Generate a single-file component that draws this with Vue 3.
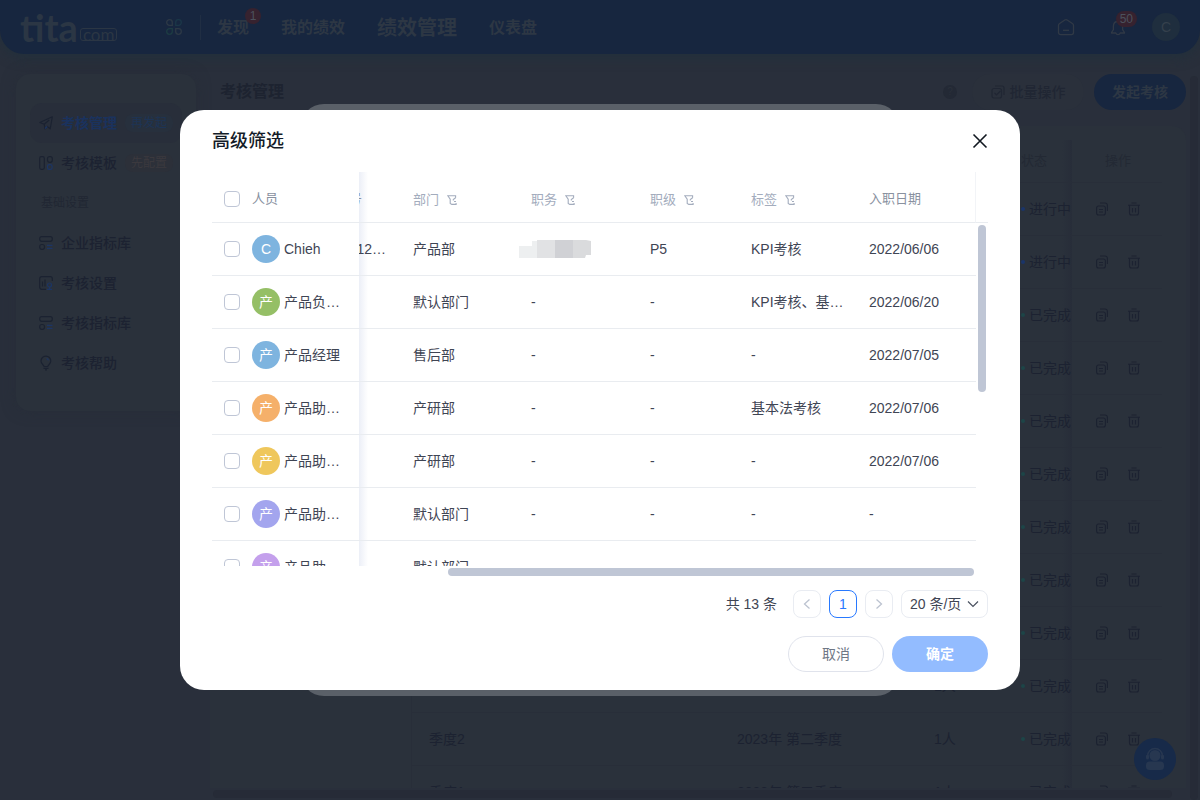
<script setup>
import { ref } from 'vue'

const navItems = [
  { label: '发现', badge: '1' },
  { label: '我的绩效' },
  { label: '绩效管理', active: true },
  { label: '仪表盘' }
]

const topLinks = [
  { label: '考核管理', icon: 'plane', tag: '再发起', active: true },
  { label: '考核模板', icon: 'blocks', tag: '先配置' }
]
const baseLinks = [
  { label: '企业指标库', icon: 'list' },
  { label: '考核设置', icon: 'chart' },
  { label: '考核指标库', icon: 'list' },
  { label: '考核帮助', icon: 'bulb' }
]

const plans = Array.from({ length: 12 }, (_, i) => ({
  name: i > 9 ? (i === 10 ? '季度2' : '季度1') : '',
  period: i > 9 ? '2023年 第二季度' : '',
  count: i > 8 ? '1人' : '',
  running: i < 2
}))

const columns = ['部门', '职务', '职级', '标签']
const people = ref([
  { name: 'Chieh', mark: 'C', tone: 'blue', no: '12…', dept: '产品部', masked: true, level: 'P5', tag: 'KPI考核', date: '2022/06/06' },
  { name: '产品负…', mark: '产', tone: 'green', dept: '默认部门', level: '-', tag: 'KPI考核、基…', date: '2022/06/20' },
  { name: '产品经理', mark: '产', tone: 'blue', dept: '售后部', level: '-', tag: '-', date: '2022/07/05' },
  { name: '产品助…', mark: '产', tone: 'orange', dept: '产研部', level: '-', tag: '基本法考核', date: '2022/07/06' },
  { name: '产品助…', mark: '产', tone: 'yellow', dept: '产研部', level: '-', tag: '-', date: '2022/07/06' },
  { name: '产品助…', mark: '产', tone: 'violet', dept: '默认部门', level: '-', tag: '-', date: '-' },
  { name: '产品助…', mark: '产', tone: 'purple', dept: '默认部门', level: '-', tag: '-', date: '-' }
].map(p => ({ ...p, checked: false })))
const allChecked = ref(false)
const pageSize = ref('20')
</script>

<template>
  <div class="app">
    <header class="topbar">
      <div class="logo"><span class="logo-name">tita</span><span class="logo-com">com</span></div>
      <svg class="grid-icon" width="16" height="16" viewBox="0 0 16 16" fill="none" stroke-width="1.3">
        <path d="M.7 3.500a2.800 2.800 0 0 1 5.600 0v2.800H3.500A2.800 2.800 0 0 1 .7 3.500z" stroke="#2d3946" />
        <path d="M15.300 3.500a2.800 2.800 0 0 0-5.600 0v2.800h2.800a2.800 2.800 0 0 0 2.800-2.800z" stroke="#1b3748" />
        <path d="M.7 12.500a2.800 2.800 0 0 0 5.600 0V9.700H3.500a2.800 2.800 0 0 0-2.800 2.800z" stroke="#1d3c43" />
        <path d="M15.300 12.500a2.800 2.800 0 0 1-5.600 0V9.700h2.800a2.800 2.800 0 0 1 2.800 2.800z" stroke="#2d3946" />
      </svg>
      <nav class="nav">
        <a v-for="n in navItems" :key="n.label" href="#" :class="{ active: n.active }">{{ n.label }}<i v-if="n.badge" class="badge">{{ n.badge }}</i></a>
      </nav>
      <div class="tools">
        <button class="tool" aria-label="首页">
          <svg width="18" height="18" viewBox="0 0 18 18" fill="none" stroke="#303946" stroke-width="1.3" stroke-linejoin="round">
            <path d="M1.500 7.200Q1.500 6.300 2.300 5.700L7.800 2q1.200-.8 2.400 0l5.500 3.700q.8.6.8 1.500v7.400a2 2 0 0 1-2 2h-11a2 2 0 0 1-2-2z" /><path d="M6 12.300h6" />
          </svg>
        </button>
        <button class="tool" aria-label="通知">
          <svg width="16" height="18" viewBox="0 0 16 18" fill="none" stroke="#303946" stroke-width="1.3" stroke-linejoin="round">
            <path d="M8 3.500c-3 0-4.600 2-4.600 4.600v3.500L1.500 14.500v.5h4.300a2.300 2.300 0 0 0 4.400 0h4.300v-.5l-1.900-2.900V8.100C12.600 5.500 11 3.500 8 3.500z" />
          </svg>
          <i class="badge wide">50</i>
        </button>
        <span class="me">C</span>
      </div>
    </header>

    <div class="body">
      <aside class="side">
        <a v-for="l in topLinks" :key="l.label" href="#" class="side-link" :class="{ active: l.active }">
          <svg v-if="l.icon === 'plane'" class="side-icon" viewBox="0 0 14 14">
            <path d="M.8 6.500 13.300.8l-2.100 12-3-2.300-2.200 2.300-.8-4.500z" /><path d="m5.200 8.300 5-4.300" /><path class="accent" d="m6 12.500 2.200-2" />
          </svg>
          <svg v-else class="side-icon" viewBox="0 0 14 14">
            <rect x=".7" y=".7" width="4.600" height="12.600" rx="1.500" /><rect x="8.500" y=".7" width="4.800" height="5.600" rx="2" /><rect class="accent" x="8.500" y="8.700" width="4.600" height="4.600" rx="1.600" />
          </svg>
          <span>{{ l.label }}</span><em>{{ l.tag }}</em>
        </a>
        <div class="side-title">基础设置</div>
        <a v-for="l in baseLinks" :key="l.label" href="#" class="side-link">
          <svg v-if="l.icon === 'list'" class="side-icon" viewBox="0 0 14 14">
            <rect x=".7" y=".7" width="12.600" height="4.600" rx="2" /><rect x=".7" y="8.500" width="4.800" height="4.800" rx="2" /><path class="accent" d="M8 9.300h5.500M8 12.300h5.500" />
          </svg>
          <svg v-else-if="l.icon === 'chart'" class="side-icon" viewBox="0 0 14 14">
            <path d="M7 13.300H2.700a2 2 0 0 1-2-2V2.700a2 2 0 0 1 2-2h8.600a2 2 0 0 1 2 2V5M3.500 5.500v5M6 3.500v7" /><circle class="accent" cx="10.500" cy="9" r="2" /><path class="accent" d="M10.500 11v2M8 13.300h5" />
          </svg>
          <svg v-else class="side-icon" viewBox="0 0 14 14">
            <path d="M5 10.500c0-1.500-3-2.500-3-5.500a4.900 4.900 0 0 1 9.800 0c0 3-3 4-3 5.500zM4.500 12.300h5M6 13.900h2" /><path class="accent" d="M7.500 2.500c1 .2 1.700 1 1.900 1.900" />
          </svg>
          <span>{{ l.label }}</span>
        </a>
      </aside>

      <main class="main">
        <div class="main-head">
          <h1>考核管理</h1>
          <span class="help">?</span>
          <button class="batch">
            <svg width="14" height="14" viewBox="0 0 14 14" fill="none" stroke="#202633" stroke-width="1.200">
              <rect x="1" y="3.500" width="9.500" height="9.500" rx="2" /><path d="M4 1h7a2 2 0 0 1 2 2v7M3.500 8l2 2 4-4" />
            </svg>批量操作
          </button>
          <button class="launch">发起考核</button>
        </div>
        <div class="plan-card">
          <table class="plans">
            <colgroup><col class="w-tree"><col><col class="w-period"><col class="w-count"><col class="w-state"><col class="w-ops"></colgroup>
            <thead><tr><th class="tree"></th><th></th><th></th><th></th><th class="state">状态</th><th class="ops">操作</th></tr></thead>
            <tbody>
              <tr v-for="(p, i) in plans" :key="i">
                <td class="tree"></td><td>{{ p.name }}</td><td>{{ p.period }}</td><td>{{ p.count }}</td>
                <td class="state"><div class="state-in"><i :class="{ run: p.running }"></i>{{ p.running ? '进行中' : '已完成' }}</div></td>
                <td class="ops">
                  <div class="op-row">
                    <button aria-label="复制">
                      <svg width="12" height="14" viewBox="0 0 12 14" fill="none" stroke="#1c2231" stroke-width="1.100">
                        <rect x=".6" y="4" width="8.800" height="9" rx="2" /><path d="M4 1h5a2.400 2.400 0 0 1 2.400 2.400V9M3 7.500h4M3 10h4" />
                      </svg>
                    </button>
                    <button aria-label="删除">
                      <svg width="12" height="14" viewBox="0 0 12 14" fill="none" stroke="#1c2231" stroke-width="1.100">
                        <path d="M0 3.300h12M3.500 1h5M1.500 3.500v7.500a2 2 0 0 0 2 2h5a2 2 0 0 0 2-2V3.500M4.500 6v4.500M7.500 6v4.500" />
                      </svg>
                    </button>
                  </div>
                </td>
              </tr>
            </tbody>
          </table>
        </div>
        <div class="plan-scroll"><span></span></div>
      </main>
    </div>
    <span class="page-scroll"></span>
    <button class="service" aria-label="客服">
      <svg width="20" height="24" viewBox="0 0 20 24">
        <path d="M2.500 10V9a7.500 7.500 0 0 1 15 0v1" fill="none" stroke="#273750" stroke-width="1.500" />
        <circle cx="10" cy="8.500" r="5.500" fill="#273750" /><rect x="1" y="7.500" width="3" height="5" rx="1.500" fill="#273750" /><rect x="16" y="7.500" width="3" height="5" rx="1.500" fill="#273750" />
        <rect x="1" y="14.500" width="18" height="8.500" rx="3.500" fill="#273750" />
      </svg>
    </button>

    <div class="sheet-back"></div>
    <section class="dialog" role="dialog" aria-labelledby="dialog-title">
      <div class="dialog-head">
        <h2 id="dialog-title">高级筛选</h2>
        <button class="close" aria-label="关闭">
          <svg width="16" height="16" viewBox="0 0 16 16" fill="none" stroke="#111820" stroke-width="1.600"><path d="m1.500 1.500 13 13M14.500 1.500l-13 13" /></svg>
        </button>
      </div>

      <div class="list">
        <div class="list-view">
          <table class="people">
            <colgroup><col class="c-check"><col class="c-name"><col class="c-no"><col class="c-dept"><col><col class="c-level"><col class="c-dept"><col class="c-date"></colgroup>
            <thead>
              <tr>
                <th class="check"><input v-model="allChecked" type="checkbox" aria-label="全选"></th>
                <th class="person">人员</th>
                <th class="no"><div>工号</div></th>
                <th v-for="c in columns" :key="c" class="filterable">
                  <div>{{ c }}
                    <svg width="10" height="10" viewBox="0 0 10 10" fill="none" stroke="#a3acbd" stroke-width="1.100"><path d="M8.600 2.800V.8H.8l2.400 3.400v4.300l1.600.9h4.300V8M8.600 2.800 6.300 4.500v1M7 6.500h2" /></svg>
                  </div>
                </th>
                <th>入职日期</th>
              </tr>
            </thead>
            <tbody>
              <tr v-for="(p, i) in people" :key="i">
                <td class="check"><input v-model="p.checked" type="checkbox" :aria-label="p.name"></td>
                <td class="person"><div><i class="avatar" :class="p.tone">{{ p.mark }}</i><span>{{ p.name }}</span></div></td>
                <td class="no"><div>{{ p.no }}</div></td>
                <td>{{ p.dept }}</td>
                <td v-if="p.masked" class="masked">
                  <svg width="72" height="20" viewBox="0 0 72 20">
                    <path d="M0 7h13V2h5v17H0z" fill="#edeff0" /><path d="M18 1h18v18H18z" fill="#e1e2e4" /><path d="M36 1h18v18H36z" fill="#d0d1d5" /><path d="M54 1h13l5 1v14h-5l-1 3H54z" fill="#dadbdd" />
                  </svg>
                </td>
                <td v-else>-</td>
                <td>{{ p.level }}</td>
                <td>{{ p.tag }}</td>
                <td>{{ p.date }}</td>
              </tr>
            </tbody>
          </table>
        </div>
        <div class="gutter"><div class="gutter-head"></div><span class="v-thumb"></span></div>
      </div>
      <div class="h-track"><span></span></div>

      <div class="pager">
        <span class="total">共 13 条</span>
        <button aria-label="上一页" disabled><svg width="8" height="12" viewBox="0 0 8 12" fill="none" stroke="#bcc3d0" stroke-width="1.300"><path d="M6.500 1.500 1.500 6l5 4.500" /></svg></button>
        <button class="current">1</button>
        <button aria-label="下一页" disabled><svg width="8" height="12" viewBox="0 0 8 12" fill="none" stroke="#bcc3d0" stroke-width="1.300"><path d="m1.500 1.500 5 4.500-5 4.500" /></svg></button>
        <div class="size">
          <select v-model="pageSize" aria-label="每页条数"><option value="20">20 条/页</option><option value="50">50 条/页</option></select>
          <svg width="12" height="8" viewBox="0 0 12 8" fill="none" stroke="#4a5160" stroke-width="1.200"><path d="M1 1.500 6 6.500l5-5" /></svg>
        </div>
      </div>
      <div class="actions"><button class="cancel">取消</button><button class="ok">确定</button></div>
    </section>
  </div>
</template>

<style>
body { background: #292f3b; }
</style>

<style scoped>
* { box-sizing: border-box; }
.app, .app button, .app select { font-family: "Liberation Sans", "Noto Sans CJK SC", sans-serif; }
.app { position: relative; display: flex; flex-direction: column; height: 100vh; overflow: hidden; font-size: 14px; line-height: 20px; color: #1c2231; background: #292f3b; }
a { color: inherit; text-decoration: none; }
i, em { font-style: normal; }
button { padding: 0; border: 0; background: none; color: inherit; font-size: 14px; line-height: 20px; }
svg { display: block; flex: none; }
h1, h2 { margin: 0; }
table { width: 100%; border-collapse: separate; border-spacing: 0; table-layout: fixed; }
th, td { padding: 0; text-align: left; font-weight: 400; white-space: nowrap; }

.topbar { display: flex; align-items: center; flex: none; height: 54px; padding: 0 20px; border-radius: 0 0 24px 24px; background: #17263f; box-shadow: 0 4px 12px #22303c; color: #2d3744; }
.logo { display: flex; align-items: flex-end; width: 98px; color: #2b3644; }
.logo-name { font: 700 38px/32px Lato, sans-serif; }
.logo-com { margin: 0 0 2px 2px; padding: 0 2px; border: 1px solid #2b3644; border-radius: 3px; font: 17px/11px Lato, sans-serif; }
.grid-icon { margin-left: 48px; }
.nav { display: flex; align-items: center; gap: 32px; margin-left: 18px; padding-left: 16px; border-left: 1px solid #202e43; font-size: 16px; font-weight: 700; line-height: 24px; }
.nav a { position: relative; padding-top: 1px; }
.nav .active { font-size: 20px; }
.badge { position: absolute; top: -7px; right: -12px; min-width: 16px; height: 16px; padding: 0 4px; border-radius: 8px; background: #36222f; color: #4c515c; font-size: 12px; font-weight: 400; line-height: 16px; text-align: center; }
.tools { display: flex; align-items: center; margin-left: auto; }
.tool { position: relative; margin-right: 35px; }
.tool + .tool { margin-right: 26px; }
.badge.wide { right: -11px; top: -7px; }
.me { width: 28px; height: 28px; border-radius: 50%; background: #1f2e3e; color: #34404c; line-height: 28px; text-align: center; }

.body { display: flex; flex: 1; min-height: 0; gap: 14px; padding: 20px 14px 0 16px; }
.side { align-self: flex-start; width: 180px; flex: none; padding: 29px 14px 28px; border-radius: 14px; background: #2a313b; box-shadow: 0 0 14px #272d38; }
.side-link { display: flex; align-items: center; height: 40px; padding-left: 9px; border-radius: 12px; font-weight: 500; }
.side-link.active { background: #282e3a; color: #1a325e; font-weight: 700; }
.side-link.active em { background: #27303d; color: #1d3455; }
.side-link em { margin-left: 8px; padding: 0 6px; border-radius: 8px; background: #2c3039; color: #3b393e; font-size: 12px; font-weight: 400; line-height: 18px; }
.side-icon { width: 14px; height: 14px; margin-right: 8px; overflow: visible; fill: none; stroke: #1b2231; stroke-width: 1.200; stroke-linejoin: round; }
.side-icon .accent { stroke: #1c3564; }
.side-title { padding-left: 11px; color: #212733; font-size: 12px; line-height: 40px; }

.main { display: flex; flex-direction: column; flex: 1; min-width: 0; }
.main-head { display: flex; align-items: center; height: 36px; flex: none; margin-bottom: 16px; padding-left: 10px; }
.main-head h1 { margin-right: auto; color: #1d2330; font-size: 16px; line-height: 24px; }
.help { width: 14px; height: 14px; margin-right: 15px; border-radius: 50%; background: #232935; color: #2a303b; font-size: 10px; line-height: 14px; text-align: center; }
.batch { display: flex; align-items: center; justify-content: center; gap: 5px; width: 112px; height: 36px; margin-right: 10px; border-radius: 18px; background: #2a303b; color: #202633; font-weight: 500; }
.launch { width: 92px; height: 36px; border-radius: 18px; background: #17263f; color: #2d3744; font-weight: 700; }
.plan-card { flex: 1; min-height: 0; overflow: hidden; padding: 14px 24px 0 0; border-radius: 14px 14px 0 0; background: #2a313b; }
.w-tree { width: 202px; } .w-period { width: 197px; } .w-count { width: 89px; } .w-state { width: 66px; } .w-ops { width: 90px; }
.plans th { height: 43px; border-bottom: 1px solid #282e39; color: #232934; font-size: 13px; }
.plans td { height: 53px; padding-left: 17px; border-bottom: 1px solid #282e39; }
.plans .tree { border-right: 1px solid #282e39; border-bottom: 0; }
.plans .state { padding-left: 15px; background: linear-gradient(to left, #272d39, transparent 10px); }
.plans .ops { padding-left: 2px; text-align: center; }
.state-in { display: flex; align-items: center; gap: 4px; }
.state-in i { width: 4px; height: 4px; flex: none; border-radius: 50%; background: #1d4547; }
.state-in .run { background: #1a3569; }
.op-row { display: flex; justify-content: center; gap: 20px; }
.plan-scroll { flex: none; height: 12px; padding: 2px 14px 2px 3px; }
.plan-scroll span { display: block; height: 8px; border-radius: 4px; background: #262b37; }
.page-scroll { position: absolute; top: 76px; right: 2px; bottom: 0; width: 8px; border-radius: 4px; background: #262b37; }
.service { position: absolute; right: 24px; bottom: 20px; display: grid; place-items: center; width: 42px; height: 42px; border-radius: 50%; background: #172a49; }

.sheet-back { position: absolute; inset: 104px 300px; border-radius: 24px; background: #5a6068; }
.dialog { position: absolute; top: 50%; left: 50%; width: 70%; min-width: 720px; padding: 0 32px 18px; transform: translate(-50%, -50%); border-radius: 24px; background: #fff; color: #3f4554; }
.dialog-head { display: flex; align-items: center; justify-content: space-between; height: 62px; }
.dialog-head h2 { color: #141c28; font-size: 18px; font-weight: 500; line-height: 26px; }
.list { display: flex; height: 394px; }
.list-view { flex: 1; min-width: 0; overflow: hidden; }
.c-check { width: 40px; } .c-name { width: 107px; } .c-no { width: 42px; } .c-dept { width: 118px; } .c-level { width: 101px; } .c-date { width: 119px; }
.people th, .people td { padding: 0 12px; border-bottom: 1px solid #e9ecf0; overflow: hidden; text-overflow: ellipsis; }
.people th { height: 51px; padding-top: 4px; color: #89919f; font-size: 13px; }
.people td { height: 53px; }
.people .check { padding-right: 0; }
.people .person { padding-left: 0; padding-right: 0; }
.people .filterable { padding-top: 6px; color: #a3acbd; }
.filterable div { display: flex; align-items: center; gap: 8px; }
.people .no { padding-left: 0; padding-right: 15px; background: linear-gradient(to right, #eceff7, transparent 9px); }
.people th.no { padding-right: 39px; }
.no div { display: flex; justify-content: flex-end; }
.people .masked { padding: 0; }
.check input { display: block; width: 16px; height: 16px; margin: 0; appearance: none; border: 1px solid #bfc6d6; border-radius: 4px; background: #fff; }
.check input:checked { background: #2879ff; }
.person div { display: flex; align-items: center; gap: 4px; }
.person span { max-width: 60px; overflow: hidden; text-overflow: ellipsis; }
.avatar { width: 28px; height: 28px; flex: none; border-radius: 50%; color: #fff; line-height: 28px; text-align: center; }
.blue { background: #7eb4df; } .green { background: #95bf66; } .orange { background: #f5b06a; } .yellow { background: #efc75c; } .violet { background: #a3a5ee; } .purple { background: #c4a0ec; }
.gutter { width: 12px; flex: none; }
.gutter-head { height: 51px; margin-left: -1px; border-left: 1px solid #f2f4f7; border-bottom: 1px solid #e9ecf0; }
.v-thumb { display: block; width: 8px; height: 167px; margin: 2px; border-radius: 4px; background: #bfc6d5; }
.h-track { height: 12px; padding: 2px 14px 2px 0; }
.h-track span { display: block; width: 69%; height: 8px; margin-left: auto; border-radius: 4px; background: #bfc6d5; }
.pager { display: flex; align-items: center; justify-content: flex-end; gap: 8px; margin-top: 12px; }
.total { margin-right: 8px; }
.pager button { display: grid; place-items: center; width: 28px; height: 28px; border: 1px solid #e9ecf2; border-radius: 8px; }
.pager .current { border-color: #2879ff; color: #2879ff; }
.size { position: relative; }
.size select { display: block; width: 87px; height: 28px; padding: 0 8px; appearance: none; border: 1px solid #e9ecf2; border-radius: 8px; background: #fff; color: #3f4554; font-size: 14px; }
.size svg { position: absolute; top: 10px; right: 9px; pointer-events: none; }
.actions { display: flex; justify-content: flex-end; gap: 8px; margin-top: 18px; }
.actions button { width: 96px; height: 36px; border-radius: 18px; }
.actions .cancel { border: 1px solid #e0e3ec; color: #6f7785; }
.actions .ok { background: #93bcff; color: #fff; font-weight: 700; }
</style>
